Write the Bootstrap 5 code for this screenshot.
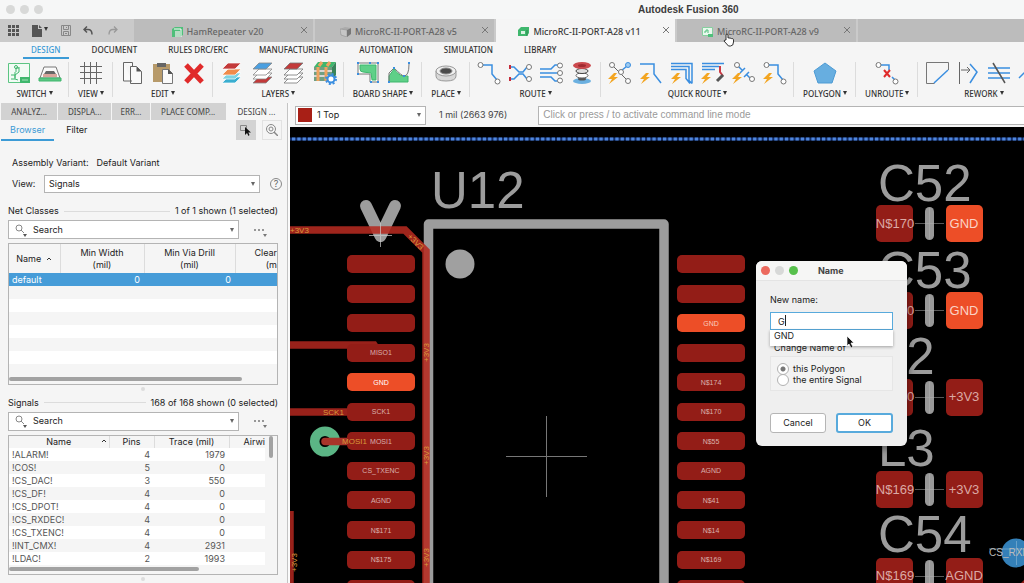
<!DOCTYPE html>
<html lang="en">
<head>
<meta charset="utf-8">
<meta name="viewport" content="width=device-width, initial-scale=1">
<title>Autodesk Fusion 360</title>
<link href="https://cdn.jsdelivr.net/npm/bootstrap@5.3.0/dist/css/bootstrap.min.css" rel="stylesheet">
<style>
:root{--ui:Inter,"Liberation Sans",sans-serif;--rib:"Noto Sans","Open Sans",sans-serif;--sky:#3c9bd6;--edge:#b4b4b4}
body{font-family:var(--ui);font-size:9px;line-height:12px;color:#222;background:#f5f5f5;min-height:100vh}
button,input,select{font:inherit;color:inherit}
a{color:inherit;text-decoration:none}
.app{height:100vh;min-height:480px;overflow:hidden}
.titlebar{height:19px;background:#f6f7f7;padding-left:6px;gap:5px}
.titlebar h1{font-family:"Liberation Sans",sans-serif;font-size:10px;line-height:19px;font-weight:700;color:#3c3c3c;left:638px;top:0}
.dot{width:9px;height:9px;border-radius:50%;background:#d8d9d8}
.docbar{height:23px;background:#cacaca;gap:2px;font-family:var(--rib);font-size:9px;color:#666;font-weight:500}
.quick{width:131px;padding:0 14px 0 7px;margin-left:1px}
.quick button,.plain{border:0;background:none;padding:0;line-height:0}
.doc{width:179px;background:#bcbcbc;padding-right:5px}
.doc.on{background:#f5f5f5;color:#3a3a3a}
.doc a{gap:4px;padding-top:2px}
.rest{background:#bcbcbc}
.menus{height:17px;padding-left:23px;gap:15px;font-family:var(--rib);font-size:8px;line-height:16px;color:#333;font-weight:500}
.menus a{padding:0 8px;height:17px}
.menus a.on{color:var(--sky);border-bottom:2px solid var(--sky)}
.ribbon{height:44px;font-family:var(--rib);font-size:8px;color:#333;font-weight:500}
.grp{padding-top:2px;flex:none}
.grp:not(:last-child){background:linear-gradient(#dcdcdc,#dcdcdc) right 3px/1px 35px no-repeat}
.grp .ics{gap:7px;padding:0 7px;height:24px}
.grp .lbl{padding:2px 9px 0;line-height:14px;border:0;background:none;white-space:nowrap}
.lbl::after,.car::after{content:"";display:inline-block;border:2px solid transparent;border-top:4px solid #333;border-bottom:0;margin-left:2px;vertical-align:2px}
svg{flex:none}
.ics svg{fill:none;stroke-width:1}
.side{width:290px;flex:none;border-right:2px solid #fafafa;box-shadow:inset -1px 0 #c4c4c4;padding-right:2px}
.ptabs{height:17px;margin-left:1px;gap:1px;font-family:var(--rib);font-size:8px;line-height:17px;color:#444}
.ptabs a{background:#d2d2d2;text-align:center;white-space:nowrap}
.ptabs a.on{background:#f5f5f5}
.sub{height:22px;padding:0 4px 0 1px}
.sub a{line-height:19px;height:21px;padding:0 9px}
.sub a+a{padding-left:12px}
.sub a.on{color:var(--sky);border-bottom:2px solid var(--sky)}
.tool{width:20px;height:20px;border:1px solid #e2e2e2;padding:0;background:none;line-height:0}
.tool.on{background:#d3d3d3;border-color:#d3d3d3;margin-right:6px}
.field{border:1px solid var(--edge);background:#fff;border-radius:0;height:18px;padding:0 4px 0 2px;min-width:0}
.field select,.field input{border:0;background:none;appearance:none;outline:0;width:100%;min-width:0;padding:0 2px}
.find{width:231px;height:19px}
.tri{border:2px solid transparent;border-top:4px solid #666;border-bottom:0;width:4px;height:4px;flex:none}
.help{margin:0 -5px 0 9px}
.panel{padding-top:15px}
.viewrow{margin-top:6px}
.cap{height:12px;gap:5px;margin:12px 0 3px}
.cap.next{margin-top:6px}
.cap span:nth-child(2){height:1px;background:#dcdcdc}
.box{border:1px solid var(--edge);overflow:hidden;background:#f5f5f5;margin-top:4px;min-height:0}
.grid-t{border-collapse:collapse;table-layout:fixed;width:100%;margin:0}
.grid-t th{font-weight:400;text-align:center;padding:0;line-height:12px;border-right:1px solid #dcdcdc;background:#f5f5f5;white-space:nowrap}
.grid-t th:last-child{border:0}
.grid-t td{padding:0 3px;height:13px;line-height:13px;color:#555}
.grid-t td+td{text-align:right;padding-right:4px}
.grid-t tbody tr:nth-child(odd) td{background:#fff}
.grid-t tbody tr.sel td{background:#469cd8;color:#fff}
.bar{height:4px;border-radius:2px;background:#a2a2a2;flex:none}
.low{margin-bottom:3px}
.grip{width:4px;height:4px;border-radius:50%;background:#dcdcdc;margin:2px auto 0;flex:none}
.grip.end{margin-bottom:2px}
.cmd{height:24px;padding:2px 0 2px 5px;color:#444}
.cmd .field{height:19px}
.cmd select{padding-left:5px;color:#222}
.layer{width:131px}
.swatch{width:14px;height:14px;background:#a81f16;flex:none}
.cmd .cmdin{margin-left:31px;border-right:0;font-family:"Liberation Sans",sans-serif;font-size:10px}
.cmdin input::placeholder{color:#9a9a9a;opacity:1}
.dark::placeholder{color:#222;opacity:1}
.board{background:#000;overflow:hidden}
.board>svg{inset:0}
.board text{font-family:"Liberation Sans",sans-serif}
.dlg{left:466px;top:134px;width:151px;border-radius:6px;background:#efefef;overflow:hidden;box-shadow:0 2px 8px #0008}
.dlg header{height:20px;padding:0 5px;background:#f6f6f5;border-bottom:1px solid #e4e4e4;gap:5px}
.dlg header b{font-size:9px;font-weight:700;color:#444;margin-left:15px}
.dlg .in{padding:13px 14px 13px}
.dlg .in>label{margin-bottom:6px}
.nm{border:1px solid #58aadc;border-radius:0;height:18px;padding:0 7px;width:100%;background:#fff;outline:0;display:block}
.caret{left:15px;top:3px;width:1px;height:11px;background:#222}
.sugg{left:0;right:0;top:100%;background:#fff;height:16px;line-height:12px;padding:0 4px;box-shadow:0 1px 3px #0005}
.setname{margin:12px 4px 2px}
.set{border:1px solid #e6e6e6;background:#f3f3f3;padding:6px 6px 5px;margin-bottom:22px}
.set label{gap:4px;height:11px}
.set input{appearance:none;width:12px;height:12px;border:1px solid #b2b2b2;border-radius:50%;background:#fff;margin:0;flex:none}
.set input:checked{background:radial-gradient(#777 0 2px,#fff 3px)}
.act{width:56px;height:20px;border:1px solid #b5b5b5;border-radius:3px;background:#fff;padding:0;color:#222}
.act.go{border:2px solid #58aadc;width:57px}
</style>
</head>
<body>
<svg width="0" height="0" class="position-absolute" aria-hidden="true">
<defs>
<path id="bolt" d="M6 0 0 6h4L1 11 10 4H6L9 0z" fill="#f3a521" stroke="none"/>
<path id="sheet" d="M0 6 6 0h13l-6 6z"/>
<rect id="pad" width="68" height="18" rx="5"/>
<g id="part"><rect width="37" height="37" rx="5"/><rect x="49" y="2" width="9" height="33" rx="4.5" fill="#989898"/><path d="M39 18.500h29M53.500 3v31" stroke="#b5b5b5" stroke-width=".7" opacity=".7"/></g>
<path id="x" d="M0 0 6 6M6 0 0 6" stroke="#777" fill="none"/>
</defs>
</svg>
<div class="app d-flex flex-column">
<header class="titlebar d-flex align-items-center position-relative"><i class="dot"></i><i class="dot"></i><i class="dot"></i><h1 class="position-absolute m-0">Autodesk Fusion 360</h1></header>
<nav class="docbar d-flex" aria-label="Documents">
<div class="quick d-flex align-items-center justify-content-between">
<button aria-label="Apps"><svg width="11" height="11" fill="#555"><path d="M0 0h3v3H0zM4 0h3v3H4zM8 0h3v3H8zM0 4h3v3H0zM4 4h3v3H4zM8 4h3v3H8zM0 8h3v3H0zM4 8h3v3H4zM8 8h3v3H8z"/></svg></button>
<button class="car" aria-label="File"><svg width="10" height="12" fill="#555"><path d="M0 0h6v4h4v8H0zM7 0l3 3H7z"/></svg></button>
<button aria-label="Save"><svg width="10" height="11" fill="none" stroke="#888"><path d="M.5.500h9v10h-9zM2.500.500v4h5v-4M2.500 10.500v-4h5v4M4 8.500h2M5.500 2v1"/></svg></button>
<button aria-label="Undo"><svg width="11" height="10" fill="none" stroke="#555" stroke-width="1.500"><path d="M4 .500 1 3.500l3 3M1 3.500h4q4 0 4 5"/></svg></button>
<button aria-label="Redo"><svg width="11" height="10" fill="none" stroke="#999" stroke-width="1.300"><path d="M7 .500 10 3.500l-3 3M10 3.500H6q-4 0-4 5"/></svg></button>
</div>
<div class="doc d-flex align-items-center"><a href="#" class="d-flex align-items-center justify-content-center flex-grow-1"><svg width="11" height="11"><path d="M0 3 3 1h8v8l-3 2H0z" fill="#4fbf7a"/><path d="M3 5h5v6H3z" fill="#b7dcc4"/><path d="M2 3h7v8" stroke="#fff" fill="none"/></svg>HamRepeater v20</a><button class="plain" aria-label="Close"><svg width="7" height="7"><use href="#x"/></svg></button></div>
<div class="doc d-flex align-items-center"><a href="#" class="d-flex align-items-center justify-content-center flex-grow-1"><svg width="11" height="10"><path d="M0 2 5 0l6 1-4 2z" fill="#aaa"/><path d="M0 2 7 3v7L1 8z" fill="#c6c6c6" stroke="#888" stroke-width=".5"/><path d="M7 3l4-2v6l-4 3z" fill="#777"/></svg>MicroRC-II-PORT-A28 v5</a><button class="plain" aria-label="Close"><svg width="7" height="7"><use href="#x"/></svg></button></div>
<div class="doc on d-flex align-items-center"><a href="#" class="d-flex align-items-center justify-content-center flex-grow-1"><svg width="11" height="9"><path d="M0 3 3 0h8v6L9 9H0z" fill="#3fb76d"/><path d="M3 4h4v3H3z" fill="#d9f1e1"/><path d="M9 3v6" stroke="#2a8a4e"/></svg>MicroRC-II-PORT-A28 v11</a><button class="plain" aria-label="Close"><svg width="7" height="7"><use href="#x"/></svg></button></div>
<div class="doc d-flex align-items-center"><a href="#" class="d-flex align-items-center justify-content-center flex-grow-1"><svg width="11" height="10"><path d="M.5.500h10v8H.500z" fill="#e9f8ee" stroke="#86cf9f"/><path d="M2 5h2V3h2v3" stroke="#4fbf7a" fill="none"/><path d="M6 7h5v3H6z" fill="#4fbf7a"/></svg>MicroRC-II-PORT-A28 v9</a><button class="plain" aria-label="Close"><svg width="7" height="7"><use href="#x"/></svg></button></div>
<div class="rest flex-grow-1"></div>
</nav>
<nav class="menus d-flex" aria-label="Workspaces"><a href="#" class="on">DESIGN</a><a href="#">DOCUMENT</a><a href="#">RULES DRC/ERC</a><a href="#">MANUFACTURING</a><a href="#">AUTOMATION</a><a href="#">SIMULATION</a><a href="#">LIBRARY</a></nav>
<div class="ribbon d-flex overflow-hidden">
<div class="grp text-center"><div class="ics d-flex">
<svg width="24" height="24"><path d="M1.500 2.500h21v19h-21z" stroke="#5cc583" fill="#f2fbf5"/><path d="M4 14h4l4-3M8 14v4l3 1M8 11v6M12 6v5M12 7h-3v4M4 18h4" stroke="#3fb76d"/><circle cx="9" cy="6" r="1.500" stroke="#3fb76d"/><path d="M13 16h10v6H13z" fill="#3fb76d"/><path d="M15 19h6" stroke="#a7e0bb"/></svg>
<svg width="24" height="24"><path d="M6 6h12l4 11H2z" fill="#fafafa" stroke="#777"/><path d="M1 17h22v3H1z" fill="#5cc583" stroke="#3fb76d"/><path d="M8 10h8l2 3H6z" fill="#666"/><path d="M6 13v3M8 13v3M10 13v3M12 13v3M14 13v3M16 13v3M18 13v3" stroke="#b8503f"/></svg>
</div><button class="lbl">SWITCH</button></div>
<div class="grp text-center"><div class="ics d-flex justify-content-center"><svg width="24" height="24"><path d="M5.500 1v22M11.500 1v22M17.500 1v22M1 5.500h22M1 11.500h22M1 17.500h22" stroke="#666"/></svg></div><button class="lbl">VIEW</button></div>
<div class="grp text-center"><div class="ics d-flex">
<svg width="24" height="24"><path d="M3.500 1.500h9v4M12 20H3.500V1.500M10.500 5.500h6l5 5v12h-11z" stroke="#666" fill="#fafafa"/><path d="M16.500 5.500v5h5z" fill="#555"/></svg>
<svg width="24" height="24"><path d="M2 3h17v18H2z" fill="#b79a6a"/><path d="M6 2h9v4H6z" fill="#666"/><path d="M11.500 8.500h6l4 4v10h-10z" fill="#fafafa" stroke="#777"/><path d="M17 8v5h5z" fill="#555"/></svg>
<svg width="24" height="24"><path d="M4 4 20 21M20 4 4 21" stroke="#e02a2a" stroke-width="5"/></svg>
</div><button class="lbl">EDIT</button></div>
<div class="grp text-center"><div class="ics d-flex">
<svg width="24" height="24"><g stroke="#fff" stroke-width=".7"><use href="#sheet" x="2" y="16" fill="#3aaed0"/><use href="#sheet" x="2" y="12" fill="#7fd2e0"/><use href="#sheet" x="2" y="8" fill="#f08b4b"/><use href="#sheet" x="2" y="2" fill="#c33a3a"/></g></svg>
<svg width="24" height="24"><g stroke="#888" stroke-width=".8"><use href="#sheet" x="2" y="16" fill="#c33a3a"/><use href="#sheet" x="2" y="12" fill="#fff"/><use href="#sheet" x="2" y="8" fill="#fff"/><use href="#sheet" x="2" y="2" fill="#4b9fe0"/></g></svg>
<svg width="24" height="24"><g stroke="#777" stroke-width=".8"><use href="#sheet" x="2" y="16" fill="#fff"/><use href="#sheet" x="2" y="12" fill="#fff"/><use href="#sheet" x="2" y="8" fill="#fff"/><use href="#sheet" x="2" y="2" fill="#c33a3a"/></g></svg>
<svg width="24" height="24"><path d="M1 6 5 1h18l-4 5z" fill="#3fb76d"/><path d="M1 6h18v14H1z" fill="#6f9f83"/><path d="M19 6l4-5v13l-4 5z" fill="#39845a"/><path d="M1 10h18M1 15h18" stroke="#d8d8d8" stroke-width="2"/><path d="M5 6v14M13 6v14M6 5l3-4M14 5l3-4" stroke="#f0a35f" stroke-width="3"/><circle cx="18" cy="18" r="3.500" fill="#fff" stroke="#3a8ee0" stroke-width="2"/><circle cx="18" cy="18" r="5" stroke="#3a8ee0" stroke-width="2" stroke-dasharray="2 1.930"/></svg>
</div><button class="lbl">LAYERS</button></div>
<div class="grp text-center"><div class="ics d-flex justify-content-center">
<svg width="24" height="24"><path d="M2 2h20v19h-8v-8H2z" stroke="#777" fill="#fff"/><path d="M4 4h16v15h-4l-1-7-8-1q-3 0-3-3z" fill="#5fd088" stroke="#3fb76d"/><path d="M1 1h2v2H1zM13 1h2v2h-2zM21 1h2v2h-2zM1 12h2v2H1zM21 20h2v2h-2zM14 20h2v2h-2z" fill="#3a8ee0"/></svg>
<svg width="24" height="24"><path d="M2 21V15L7 8q6 9 14 7v6z" fill="#5fd088" stroke="#3fb76d"/><path d="M2 21V12L7 7q8 8 10 8 5 0 5-12" stroke="#777"/><path d="M1 20h2v2H1zM6 6h2v2H6zM16 14h2v2h-2zM21 1h2v2h-2z" fill="#3a8ee0"/></svg>
</div><button class="lbl">BOARD SHAPE</button></div>
<div class="grp text-center"><div class="ics d-flex justify-content-center"><svg width="24" height="24"><path d="M2 10v5q0 5 10 5t10-5v-5z" fill="#d8d8d8" stroke="#999"/><ellipse cx="12" cy="10" rx="10" ry="5" fill="#f0f0f0" stroke="#999"/><ellipse cx="12" cy="10" rx="6" ry="3" fill="#4a4a4a" stroke="#888"/></svg></div><button class="lbl">PLACE</button></div>
<div class="grp text-center"><div class="ics d-flex">
<svg width="24" height="24"><path d="M6 4h9v9l5 6" stroke="#3a8ee0" stroke-width="1.500"/><g stroke="#777" fill="#fff"><circle cx="3.500" cy="4" r="2.500"/><circle cx="20.500" cy="20.500" r="2.500"/></g></svg>
<svg width="24" height="24"><path d="M3 6h3l5 5h4l4-5M3 18h3l5-5h4l4 5" stroke="#3a8ee0" stroke-width="1.500"/><path d="M1 4h2v4H1zM1 16h2v4H1z" fill="#c62c3a"/><g stroke="#777" fill="#fff"><circle cx="21" cy="6" r="2.500"/><circle cx="21" cy="18" r="2.500"/></g></svg>
<svg width="24" height="24"><path d="M1 8h11l4-4h3M1 12h18M1 16h11l4 4h3" stroke="#3a8ee0" stroke-width="1.500"/><g stroke="#777" fill="#fff"><circle cx="21" cy="4.500" r="2.500"/><circle cx="21" cy="12" r="2.500"/><circle cx="21" cy="19.500" r="2.500"/></g></svg>
<svg width="24" height="24"><ellipse cx="12" cy="20" rx="9" ry="3" fill="#6bb0e0"/><ellipse cx="12" cy="18" rx="4" ry="1.500" fill="#555"/><ellipse cx="12" cy="14.500" rx="6" ry="2.500" fill="#fff" stroke="#666"/><ellipse cx="12" cy="10" rx="6" ry="2.500" fill="#ddd" stroke="#444"/><ellipse cx="12" cy="4.500" rx="9" ry="3.500" fill="#cc4a4e"/><ellipse cx="12" cy="4.500" rx="4" ry="1.500" fill="#a02a30"/></svg>
</div><button class="lbl">ROUTE</button></div>
<div class="grp text-center"><div class="ics d-flex">
<svg width="24" height="24"><path d="M5 5l15 15" stroke="#666"/><path d="M13 10l6-5" stroke="#3a8ee0" stroke-width="1.500"/><g stroke="#777" fill="#fff"><circle cx="4" cy="4" r="2.500"/><circle cx="13" cy="11" r="2.500"/><circle cx="20" cy="20" r="2.500"/><circle cx="20" cy="4" r="2.500" fill="#9ecbf0" stroke="#3a8ee0"/></g><use href="#bolt" x="0" y="12"/></svg>
<svg width="24" height="24"><path d="M1 3h14v10l7 9" stroke="#3a8ee0" stroke-width="1.500"/><use href="#bolt" x="1" y="12"/></svg>
<svg width="24" height="24"><path d="M1 2.500h21v20M1 5.500h18v14l3 3M1 8.500h15v9l4 5" stroke="#3a8ee0" stroke-width="1.500"/><use href="#bolt" x="1" y="12"/></svg>
<svg width="24" height="24"><path d="M1 2.500h22M1 5.500h17M1 8.500h13" stroke="#3a8ee0" stroke-width="1.500"/><path d="M19 5v6l3 4" stroke="#cc3a45" stroke-width="2"/><path d="M22 14l-6 6" stroke="#555" stroke-width="3"/><use href="#bolt" x="0" y="12"/></svg>
<svg width="24" height="24"><path d="M6 5l5 5M15 14l4 4M8 12l5-5M12 16l5-5" stroke="#3a8ee0" stroke-width="1.500"/><g stroke="#777" fill="#fff"><circle cx="5" cy="4" r="2.500"/><circle cx="20" cy="18" r="2.500"/></g><use href="#bolt" x="0" y="12"/></svg>
<svg width="24" height="24"><path d="M5 4h10v9l5 6" stroke="#3a8ee0" stroke-width="1.500"/><g stroke="#777" fill="#fff"><circle cx="3.500" cy="4" r="2.500"/><circle cx="20.500" cy="20.500" r="2.500"/></g><use href="#bolt" x="0" y="12"/></svg>
</div><button class="lbl">QUICK ROUTE</button></div>
<div class="grp text-center"><div class="ics d-flex justify-content-center"><svg width="24" height="24"><path d="M12 2l11 8-4 12H5L1 10z" fill="#67aee0" stroke="#4d9bd4"/></svg></div><button class="lbl">POLYGON</button></div>
<div class="grp text-center"><div class="ics d-flex justify-content-center"><svg width="24" height="24"><path d="M5 4h9v5M17 16l3 3" stroke="#3a8ee0" stroke-width="1.500"/><path d="M9 9l6 7M15 9l-6 7" stroke="#e02a2a" stroke-width="2"/><g stroke="#777" fill="#fff"><circle cx="3.500" cy="4" r="2.500"/><circle cx="20.500" cy="20.500" r="2.500"/></g></svg></div><button class="lbl">UNROUTE</button></div>
<div class="grp text-center"><div class="ics d-flex">
<svg width="24" height="24"><path d="M23.500 9V1.500h-22v21h8" stroke="#777"/><path d="M23 9 9 22" stroke="#3a8ee0" stroke-width="1.500"/></svg>
<svg width="24" height="24"><path d="M3.500 1v22M5 9h9M11 6l3 3-3 3" stroke="#666"/><path d="M14 3l7 8-7 11" stroke="#3a8ee0" stroke-width="1.500"/></svg>
<svg width="24" height="24"><path d="M1 7h22M1 12h22M1 17h22" stroke="#3a8ee0" stroke-width="1.500"/><path d="M6 2l12 20" stroke="#555" stroke-width="1.500"/></svg>
<svg width="24" height="24"><path d="M1 17l8-8h14" stroke="#3a8ee0" stroke-width="1.500"/></svg>
</div><button class="lbl">REWORK</button></div>
</div>
<main class="d-flex flex-grow-1 overflow-hidden" style="min-height:0">
<aside class="side d-flex flex-column">
<nav class="ptabs d-flex" aria-label="Panels"><a href="#" style="flex:56">ANALYZ...</a><a href="#" style="flex:53">DISPLA...</a><a href="#" style="flex:37">ERR...</a><a href="#" style="flex:75">PLACE COMP...</a><a href="#" class="on" style="flex:59">DESIGN ...</a></nav>
<div class="sub d-flex"><a href="#" class="on">Browser</a><a href="#">Filter</a>
<button class="tool on ms-auto" aria-label="Select"><svg width="12" height="12"><path d="M.500 1.500h6v5h-6z" fill="none" stroke="#888"/><path d="M5 3v8l2-2 1.500 3 1-1-1.200-2.500H11z" fill="#111"/></svg></button>
<button class="tool" aria-label="Find"><svg width="12" height="12" fill="none" stroke="#888"><circle cx="5" cy="5" r="4.500"/><circle cx="5" cy="5" r="2"/><path d="M8 8l4 4" stroke-width="1.500"/></svg></button></div>
<div class="panel d-flex flex-column flex-grow-1 ps-2 pe-2" style="min-height:0">
<div class="d-flex ps-1"><span>Assembly Variant:</span><span class="ms-2">Default Variant</span></div>
<div class="viewrow d-flex align-items-center ps-1"><label for="vw" style="width:32px">View:</label><div class="field d-flex align-items-center flex-grow-1"><select id="vw"><option>Signals</option></select><i class="tri"></i></div><button class="plain help" aria-label="Help"><svg width="14" height="14"><circle cx="7" cy="7" r="5.500" fill="none" stroke="#888"/><text x="7" y="10" font-size="9" text-anchor="middle" fill="#666">?</text></svg></button></div>
<div class="cap d-flex align-items-center"><span>Net Classes</span><span class="flex-grow-1"></span><span>1 of 1 shown (1 selected)</span></div>
<div class="d-flex align-items-center"><div class="field find d-flex align-items-center"><svg width="16" height="14" class="ms-1" fill="none" stroke="#888"><circle cx="4" cy="5" r="3"/><path d="M6 7l3 3"/><path d="M8 11h4l-2 3z" fill="#555" stroke="none"/></svg><input class="dark" placeholder="Search" aria-label="Search net classes"><i class="tri"></i></div><button class="plain mx-auto" aria-label="More"><svg width="18" height="14" fill="#777"><circle cx="5" cy="7" r="1"/><circle cx="9" cy="7" r="1"/><circle cx="13" cy="7" r="1"/><path d="M13 11h4l-2 3z"/></svg></button></div>
<div class="box d-flex flex-column" style="flex:142 0 0"><div class="overflow-hidden flex-grow-1" style="min-height:0">
<table class="grid-t"><colgroup><col style="width:51px"><col style="width:84px"><col style="width:91px"><col></colgroup><thead><tr style="height:29px"><th>Name &nbsp;<svg width="6" height="4"><path d="M1 3l2-2 2 2" fill="none" stroke="#333"/></svg></th><th>Min Width<br>(mil)</th><th>Min Via Drill<br>(mil)</th><th class="text-end">Clear<br>(m</th></tr></thead><tbody><tr class="sel"><td>default</td><td>0</td><td>0</td><td></td></tr><tr><td colspan="4"></td></tr><tr><td colspan="4"></td></tr><tr><td colspan="4"></td></tr><tr><td colspan="4"></td></tr><tr><td colspan="4"></td></tr><tr><td colspan="4"></td></tr><tr><td colspan="4"></td></tr></tbody></table></div>
<div class="bar low" style="width:87%"></div></div>
<div class="grip"></div>
<div class="cap next d-flex align-items-center"><span>Signals</span><span class="flex-grow-1"></span><span>168 of 168 shown (0 selected)</span></div>
<div class="d-flex align-items-center"><div class="field find d-flex align-items-center"><svg width="16" height="14" class="ms-1" fill="none" stroke="#888"><circle cx="4" cy="5" r="3"/><path d="M6 7l3 3"/><path d="M8 11h4l-2 3z" fill="#555" stroke="none"/></svg><input class="dark" placeholder="Search" aria-label="Search signals"><i class="tri"></i></div><button class="plain mx-auto" aria-label="More"><svg width="18" height="14" fill="#777"><circle cx="5" cy="7" r="1"/><circle cx="9" cy="7" r="1"/><circle cx="13" cy="7" r="1"/><path d="M13 11h4l-2 3z"/></svg></button></div>
<div class="box d-flex flex-column" style="flex:140 0 0"><div class="d-flex overflow-hidden flex-grow-1" style="min-height:0"><div class="overflow-hidden flex-grow-1" style="min-width:0">
<table class="grid-t"><colgroup><col style="width:100px"><col style="width:45px"><col style="width:75px"><col></colgroup><thead><tr><th>Name<svg width="6" height="4" style="margin:0 -36px 3px 30px"><path d="M1 3l2-2 2 2" fill="none" stroke="#333"/></svg></th><th>Pins</th><th>Trace (mil)</th><th class="text-end">Airwi</th></tr></thead><tbody>
<tr><td>!ALARM!</td><td>4</td><td>1979</td><td></td></tr><tr><td>!COS!</td><td>5</td><td>0</td><td></td></tr><tr><td>!CS_DAC!</td><td>3</td><td>550</td><td></td></tr><tr><td>!CS_DF!</td><td>4</td><td>0</td><td></td></tr><tr><td>!CS_DPOT!</td><td>4</td><td>0</td><td></td></tr><tr><td>!CS_RXDEC!</td><td>4</td><td>0</td><td></td></tr><tr><td>!CS_TXENC!</td><td>4</td><td>0</td><td></td></tr><tr><td>!INT_CMX!</td><td>4</td><td>2931</td><td></td></tr><tr><td>!LDAC!</td><td>2</td><td>1993</td><td></td></tr></tbody></table></div><div class="bar mx-1" style="height:22px;width:4px"></div></div>
<div class="bar low" style="width:71%"></div></div>
<div class="grip end"></div>
</div>
</aside>
<section class="d-flex flex-column flex-grow-1" style="min-width:0">
<div class="cmd d-flex align-items-center"><div class="field layer d-flex align-items-center"><i class="swatch"></i><select aria-label="Layer"><option>1 Top</option></select><i class="tri"></i></div><span style="margin-left:13px">1 mil (2663 976)</span><div class="field cmdin d-flex align-items-center flex-grow-1"><input aria-label="Command line" placeholder="Click or press / to activate command line mode"></div></div>
<div class="board flex-grow-1 position-relative">
<svg class="position-absolute" width="100%" height="100%" role="img" aria-label="Board layout">
<g transform="translate(-290 -127)">
<path d="M290 139H3000" stroke="#14306e" stroke-width="3"/><path d="M292 139H3000" stroke="#4f86dd" stroke-width="3" stroke-dasharray="3.300 2"/>
<g fill="#9c9c9c" font-size="51"><text x="431" y="208">U12</text><text x="878" y="201">C52</text><text x="878" y="288">C53</text><text x="878" y="374">L2</text><text x="878" y="466">L3</text><text x="878" y="552">C54</text></g>
<path d="M428.500 2000V224H664v1776" fill="none" stroke="#9c9c9c" stroke-width="9.500" stroke-linejoin="round"/>
<circle cx="460" cy="264" r="14.500" fill="#a0a0a0"/>
<path d="M366 206l14.500 30 14.500-30" fill="none" stroke="#9c9c9c" stroke-width="12" stroke-linecap="round" stroke-linejoin="round"/>
<path d="M290 230h115l21 21v1700" fill="none" stroke="#b52a20" stroke-width="7.500" opacity=".88"/>
<path d="M369 235.500h23M380.500 223v24" stroke="#ccc" opacity=".7"/>
<path d="M506 456.500h81M546.500 416v81" stroke="#777"/>
<g fill="none" stroke="#98211a" stroke-width="7.500"><path d="M290 345h84l4 6M290 412h60M290 511v200"/></g>
<circle cx="325" cy="441.500" r="10.300" fill="none" stroke="#5bb585" stroke-width="9.500"/><path d="M325 441.500h26" stroke="#a8342a" stroke-width="7.500" stroke-linecap="round"/>
<g fill="#931d17">
<use href="#pad" x="347" y="255"/><use href="#pad" x="347" y="285"/><use href="#pad" x="347" y="314"/><use href="#pad" x="347" y="344"/><use href="#pad" x="347" y="373" fill="#ed4e27"/><use href="#pad" x="347" y="403"/><use href="#pad" x="347" y="432"/><use href="#pad" x="347" y="462"/><use href="#pad" x="347" y="491"/><use href="#pad" x="347" y="521"/><use href="#pad" x="347" y="551"/><use href="#pad" x="347" y="580"/>
<use href="#pad" x="677" y="255"/><use href="#pad" x="677" y="285"/><use href="#pad" x="677" y="314" fill="#ed4e27"/><use href="#pad" x="677" y="344"/><use href="#pad" x="677" y="373"/><use href="#pad" x="677" y="403"/><use href="#pad" x="677" y="432"/><use href="#pad" x="677" y="462"/><use href="#pad" x="677" y="491"/><use href="#pad" x="677" y="521"/><use href="#pad" x="677" y="551"/><use href="#pad" x="677" y="580"/>
<use href="#part" x="876" y="205"/><use href="#part" x="876" y="292"/><use href="#part" x="876" y="379"/><use href="#part" x="876" y="471"/><use href="#part" x="876" y="558"/>
<rect x="946" y="379" width="37" height="37" rx="5"/><rect x="946" y="471" width="37" height="37" rx="5"/><rect x="946" y="558" width="37" height="37" rx="5"/>
<g fill="#ed4e27"><rect x="946" y="205" width="37" height="37" rx="5"/><rect x="946" y="292" width="37" height="37" rx="5"/></g>
<path d="M1014 590l15-15v15z"/></g>
<g fill="#d9b0ac" font-size="7" text-anchor="middle"><text x="381" y="355">MISO1</text><text x="381" y="385" fill="#fff">GND</text><text x="381" y="414">SCK1</text><text x="381" y="444">MOSI1</text><text x="381" y="473">CS_TXENC</text><text x="381" y="503">AGND</text><text x="381" y="533">N$171</text><text x="381" y="562">N$175</text>
<text x="711" y="326" fill="#f8cabc">GND</text><text x="711" y="385">N$174</text><text x="711" y="414">N$170</text><text x="711" y="444">N$55</text><text x="711" y="473">AGND</text><text x="711" y="503">N$41</text><text x="711" y="533">N$14</text><text x="711" y="562">N$169</text></g>
<g fill="#dba9a4" font-size="13" text-anchor="middle"><text x="895" y="228">N$170</text><text x="895" y="315">N$170</text><text x="895" y="401">N$170</text><text x="895" y="494">N$169</text><text x="895" y="580">N$169</text><text x="964" y="228" fill="#fbd3c6">GND</text><text x="964" y="315" fill="#fbd3c6">GND</text><text x="964" y="401">+3V3</text><text x="964" y="494">+3V3</text><text x="964" y="580">AGND</text></g>
<g fill="#d99a3a" font-size="8"><text x="290" y="233">+3V3</text><text x="323" y="415">SCK1</text><text x="342" y="444">MOSI1</text><text transform="translate(407 237) rotate(45)">+3V3</text><text transform="translate(429 362) rotate(-90)">+3V3</text><text transform="translate(429 465) rotate(-90)">+3V3</text><text transform="translate(429 567) rotate(-90)">+3V3</text><text transform="translate(297 572) rotate(-90)">+3V3</text></g>
<circle cx="1016" cy="553" r="14.500" fill="#3480b8"/><path d="M989 549h40M1016.500 541v24" stroke="#8ab8d8" opacity=".6"/><text x="989" y="556" font-size="10" fill="#bbb">CS_RXI</text>
</g></svg>
<div class="dlg position-absolute" role="dialog" aria-label="Name"><header class="d-flex align-items-center"><i class="dot" style="background:#ec6a5e"></i><i class="dot"></i><i class="dot" style="background:#57c04c"></i><b>Name</b></header>
<form class="in"><label for="nn" class="d-block">New name:</label><div class="position-relative"><input id="nn" class="nm" value="G"><i class="caret position-absolute"></i><div class="sugg position-absolute">GND</div></div>
<div class="setname">Change Name of</div>
<div class="set"><label class="d-flex align-items-center"><input type="radio" name="w" checked>this Polygon</label><label class="d-flex align-items-center"><input type="radio" name="w">the entire Signal</label></div>
<div class="d-flex justify-content-between"><button type="button" class="act">Cancel</button><button type="button" class="act go">OK</button></div></form></div>
<svg class="position-absolute" style="left:556px;top:208px" width="9" height="14"><path d="M1 1v10l2-2 2 4 2-1-2-4h3z" fill="#111" stroke="#fff" stroke-width=".7"/></svg>
</div>
</section>
</main>
</div>
<svg class="position-absolute" style="left:723px;top:33px" width="12" height="14"><path d="M3 7V1.500q1-1 2 0V5q1-.7 2 .3 1-.6 1.700.4 1.500-.4 1.800.8V9q0 4-3 4H5.500L1 8q.5-1.500 2-1z" fill="#fff" stroke="#333"/></svg>
</body>
</html>
